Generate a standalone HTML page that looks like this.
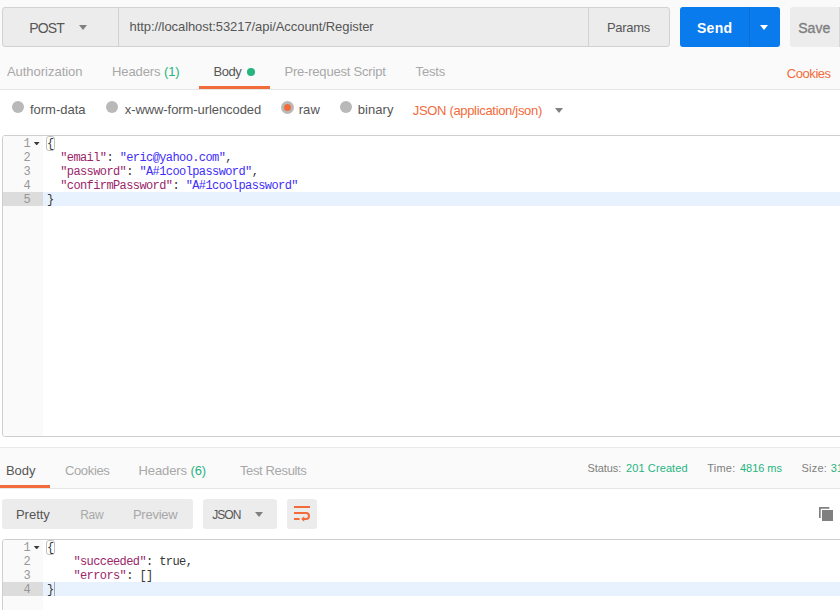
<!DOCTYPE html>
<html lang="en">
<head>
<meta charset="utf-8">
<title>Postman - Register request</title>
<style>
html,body{margin:0;padding:0;}
body{width:840px;height:610px;overflow:hidden;background:#fff;position:relative;font-family:"Liberation Sans",sans-serif;}
#root{position:absolute;left:0;top:0;width:840px;height:610px;overflow:hidden;background:#fff;}
.abs{position:absolute;}
.t{position:absolute;white-space:nowrap;line-height:1;font-family:"Liberation Sans",sans-serif;}
.hdrbg{left:0;top:0;width:840px;height:89px;background:#fafafa;border-bottom:1px solid #e6e6e6;}
.urlbox{left:2px;top:7px;width:666px;height:38px;border:1px solid #d2d2d2;border-radius:3px;background:#ececec;}
.vdiv{width:1px;background:#d2d2d2;}
.send{left:680px;top:7px;width:100px;height:40px;background:#097bed;border-radius:3px;}
.save{left:790px;top:7px;width:60px;height:40px;background:#ececec;border-radius:3px;}
.caret{width:0;height:0;border-left:4px solid transparent;border-right:4px solid transparent;border-top:5px solid #808080;}
.radio{width:12px;height:12px;border-radius:50%;background:#b9b9b9;top:101px;}
.editor{left:2px;width:860px;border:1px solid #cfcfcf;border-radius:3px;background:#fff;overflow:hidden;}
.gutter{left:0;top:0;width:40px;height:100%;background:#fafafa;}
.ln{position:absolute;left:0;width:40px;height:14px;}
.ln.act{background:#dcdcdc;}
.ln span{position:absolute;right:13px;top:1px;}
.code,.ln{font-family:"Liberation Mono",monospace;font-size:12px;letter-spacing:-0.6px;line-height:14px;white-space:pre;}
.ln{color:#979797;}
.code{position:absolute;left:44px;height:14px;color:#363636;margin-top:1px;}
.actline{position:absolute;left:40px;width:820px;height:14px;background:#e8f2fe;}
.k{color:#9a2569;}
.s{color:#3f2ef8;}
.fold{position:absolute;left:30.4px;width:6.6px;height:3.8px;background:#3c3c3c;clip-path:polygon(0 0,100% 0,50% 100%);}
.bm{position:absolute;box-sizing:border-box;border:1px solid #c0c0c0;border-radius:3px;}
.resbar{left:0;top:447px;width:840px;height:40px;background:#fafafa;border-top:1px solid #e8e8e8;border-bottom:1px solid #e6e6e6;}
.btn{top:499px;height:30px;background:#ececec;border-radius:3px;}
.ul{background:#f26b3a;height:3px;}
</style>
</head>
<body>
<div id="root">
<div class="abs hdrbg"></div>
<div class="abs urlbox"></div>
<div class="abs vdiv" style="left:118px;top:8px;height:38px"></div>
<div class="abs vdiv" style="left:588px;top:8px;height:38px"></div>
<div class="abs caret" style="left:79px;top:25px"></div>
<div class="abs send"></div>
<div class="abs" style="left:749px;top:7px;width:1px;height:40px;background:#0a6fd6"></div>
<div class="abs caret" style="left:760px;top:25px;border-top-color:#fff"></div>
<div class="abs save"></div>
<div class="abs" style="left:839px;top:7px;width:1px;height:40px;background:#d8d8d8"></div>
<div class="abs ul" style="left:199px;top:86px;width:71px"></div>
<div class="abs" style="left:247px;top:68px;width:8px;height:8px;border-radius:50%;background:#26b47f"></div>

<div class="abs radio" style="left:12px"></div>
<div class="abs radio" style="left:106px"></div>
<div class="abs radio" style="left:281px;width:13px;height:13px"><div class="abs" style="left:3px;top:3px;width:7px;height:7px;border-radius:50%;background:#f26b3a"></div></div>
<div class="abs radio" style="left:340px"></div>
<div class="abs caret" style="left:555px;top:108px"></div>

<div class="abs editor" style="top:135px;height:300px">
  <div class="abs gutter"></div>
  <div class="ln" style="top:0"><span>1</span></div><div class="fold" style="top:5.6px"></div>
  <div class="ln" style="top:14px"><span>2</span></div>
  <div class="ln" style="top:28px"><span>3</span></div>
  <div class="ln" style="top:42px"><span>4</span></div>
  <div class="ln act" style="top:56px"><span>5</span></div>
  <div class="actline" style="top:56px"></div>
  <div class="bm" style="left:43px;top:0;width:9px;height:15px"></div>
  <div class="code" style="top:0">{</div>
  <div class="code" style="top:14px">  <span class="k">"email"</span>: <span class="s">"eric@yahoo.com"</span>,</div>
  <div class="code" style="top:28px">  <span class="k">"password"</span>: <span class="s">"A#1coolpassword"</span>,</div>
  <div class="code" style="top:42px">  <span class="k">"confirmPassword"</span>: <span class="s">"A#1coolpassword"</span></div>
  <div class="code" style="top:56px">}</div>
</div>

<div class="abs resbar"></div>
<div class="abs ul" style="left:0;top:485px;width:50px"></div>

<div class="abs btn" style="left:2px;width:191px"></div>
<div class="abs btn" style="left:203px;width:74px"></div>
<div class="abs caret" style="left:255px;top:512px"></div>
<div class="abs btn" style="left:287px;width:30px"></div>
<svg class="abs" style="left:287px;top:499px" width="30" height="30" viewBox="0 0 30 30">
  <g fill="none" stroke="#f26b3a" stroke-width="2">
    <path d="M7 8H23"/>
    <path d="M7 14H19a3 3 0 0 1 0 6H17"/>
    <path d="M7 20H12.6"/>
  </g>
  <path d="M14.1 20L17.2 17.2V22.8Z" fill="#f26b3a"/>
</svg>
<svg class="abs" style="left:819px;top:507px" width="14" height="14" viewBox="0 0 14 14">
  <path d="M0.85 11V0.85H10.3" fill="none" stroke="#808080" stroke-width="1.7"/>
  <rect x="3" y="3" width="11" height="11" fill="#808080"/>
</svg>

<div class="abs editor" style="top:539px;height:100px">
  <div class="abs gutter"></div>
  <div class="ln" style="top:0"><span>1</span></div><div class="fold" style="top:5.6px"></div>
  <div class="ln" style="top:14px"><span>2</span></div>
  <div class="ln" style="top:28px"><span>3</span></div>
  <div class="ln act" style="top:42px"><span>4</span></div>
  <div class="actline" style="top:42px"></div>
  <div class="bm" style="left:43px;top:0;width:9px;height:15px"></div>
  <div class="abs" style="left:51px;top:42px;width:1px;height:14px;background:#a8a8a8"></div>
  <div class="code" style="top:0">{</div>
  <div class="code" style="top:14px">    <span class="k">"succeeded"</span>: true,</div>
  <div class="code" style="top:28px">    <span class="k">"errors"</span>: []</div>
  <div class="code" style="top:42px">}</div>
</div>
<span class="t" id="post" style="left:29.13px;top:21.15px;font-size:14px;font-weight:400;color:#565656;letter-spacing:-0.808px">POST</span>
<span class="t" id="url" style="left:129.59px;top:20.00px;font-size:13px;font-weight:400;color:#565656;letter-spacing:-0.073px">http://localhost:53217/api/Account/Register</span>
<span class="t" id="params" style="left:606.97px;top:21.00px;font-size:13px;font-weight:400;color:#565656;letter-spacing:-0.310px">Params</span>
<span class="t" id="send" style="left:696.88px;top:21.15px;font-size:14px;font-weight:700;color:#ffffff;letter-spacing:0.348px">Send</span>
<span class="t" id="save" style="left:798.20px;top:21.15px;font-size:14px;font-weight:400;color:#808080;letter-spacing:0.065px;-webkit-text-stroke:0.35px #808080">Save</span>
<span class="t" id="auth" style="left:6.93px;top:65.00px;font-size:13px;font-weight:400;color:#a8a8a8;letter-spacing:-0.020px">Authorization</span>
<span class="t" id="hdr1" style="left:111.97px;top:65.00px;font-size:13px;font-weight:400;color:#a8a8a8;letter-spacing:-0.103px">Headers <span style="color:#26b47f">(1)</span></span>
<span class="t" id="body1" style="left:213.45px;top:65.00px;font-size:13px;font-weight:400;color:#565656;letter-spacing:-0.448px">Body</span>
<span class="t" id="prereq" style="left:284.45px;top:65.00px;font-size:13px;font-weight:400;color:#a8a8a8;letter-spacing:-0.200px">Pre-request Script</span>
<span class="t" id="tests" style="left:415.60px;top:65.00px;font-size:13px;font-weight:400;color:#a8a8a8;letter-spacing:-0.191px">Tests</span>
<span class="t" id="cookies1" style="left:786.86px;top:67.00px;font-size:13px;font-weight:400;color:#f26b3a;letter-spacing:-0.454px">Cookies</span>
<span class="t" id="formdata" style="left:29.92px;top:103.00px;font-size:13px;font-weight:400;color:#565656;letter-spacing:0.002px">form-data</span>
<span class="t" id="xwww" style="left:124.79px;top:103.00px;font-size:13px;font-weight:400;color:#565656;letter-spacing:-0.080px">x-www-form-urlencoded</span>
<span class="t" id="raw" style="left:298.64px;top:103.00px;font-size:13px;font-weight:400;color:#565656;letter-spacing:0.114px">raw</span>
<span class="t" id="binary" style="left:357.68px;top:103.00px;font-size:13px;font-weight:400;color:#565656;letter-spacing:0.078px">binary</span>
<span class="t" id="jsonapp" style="left:412.71px;top:104.00px;font-size:13px;font-weight:400;color:#f26b3a;letter-spacing:-0.320px">JSON (application/json)</span>
<span class="t" id="body2" style="left:5.97px;top:464.00px;font-size:13px;font-weight:400;color:#565656;letter-spacing:-0.029px">Body</span>
<span class="t" id="cookies2" style="left:64.89px;top:464.00px;font-size:13px;font-weight:400;color:#a8a8a8;letter-spacing:-0.334px">Cookies</span>
<span class="t" id="hdr2" style="left:138.45px;top:464.00px;font-size:13px;font-weight:400;color:#a8a8a8;letter-spacing:-0.089px">Headers <span style="color:#26b47f">(6)</span></span>
<span class="t" id="testres" style="left:239.92px;top:464.00px;font-size:13px;font-weight:400;color:#a8a8a8;letter-spacing:-0.355px">Test Results</span>
<span class="t" id="status" style="left:587.42px;top:462.69px;font-size:11px;font-weight:400;color:#808080;letter-spacing:-0.061px">Status:</span>
<span class="t" id="statusv" style="left:626.04px;top:462.69px;font-size:11px;font-weight:400;color:#26b47f;letter-spacing:0.104px">201 Created</span>
<span class="t" id="time" style="left:707.20px;top:462.69px;font-size:11px;font-weight:400;color:#808080;letter-spacing:0.226px">Time:</span>
<span class="t" id="timev" style="left:739.98px;top:462.69px;font-size:11px;font-weight:400;color:#26b47f;letter-spacing:-0.029px">4816 ms</span>
<span class="t" id="size" style="left:801.42px;top:462.69px;font-size:11px;font-weight:400;color:#808080;letter-spacing:0.244px">Size:</span>
<span class="t" id="sizev" style="left:830.86px;top:462.69px;font-size:11px;font-weight:400;color:#26b47f;letter-spacing:0.000px">311 B</span>
<span class="t" id="pretty" style="left:15.97px;top:508.00px;font-size:13px;font-weight:400;color:#565656;letter-spacing:-0.019px">Pretty</span>
<span class="t" id="rawbtn" style="left:80.21px;top:508.84px;font-size:12px;font-weight:400;color:#a8a8a8;letter-spacing:-0.326px">Raw</span>
<span class="t" id="preview" style="left:132.96px;top:508.00px;font-size:13px;font-weight:400;color:#a8a8a8;letter-spacing:-0.261px">Preview</span>
<span class="t" id="jsondd" style="left:212.19px;top:508.84px;font-size:12px;font-weight:400;color:#565656;letter-spacing:-0.956px">JSON</span>
</div>

</body>
</html>
